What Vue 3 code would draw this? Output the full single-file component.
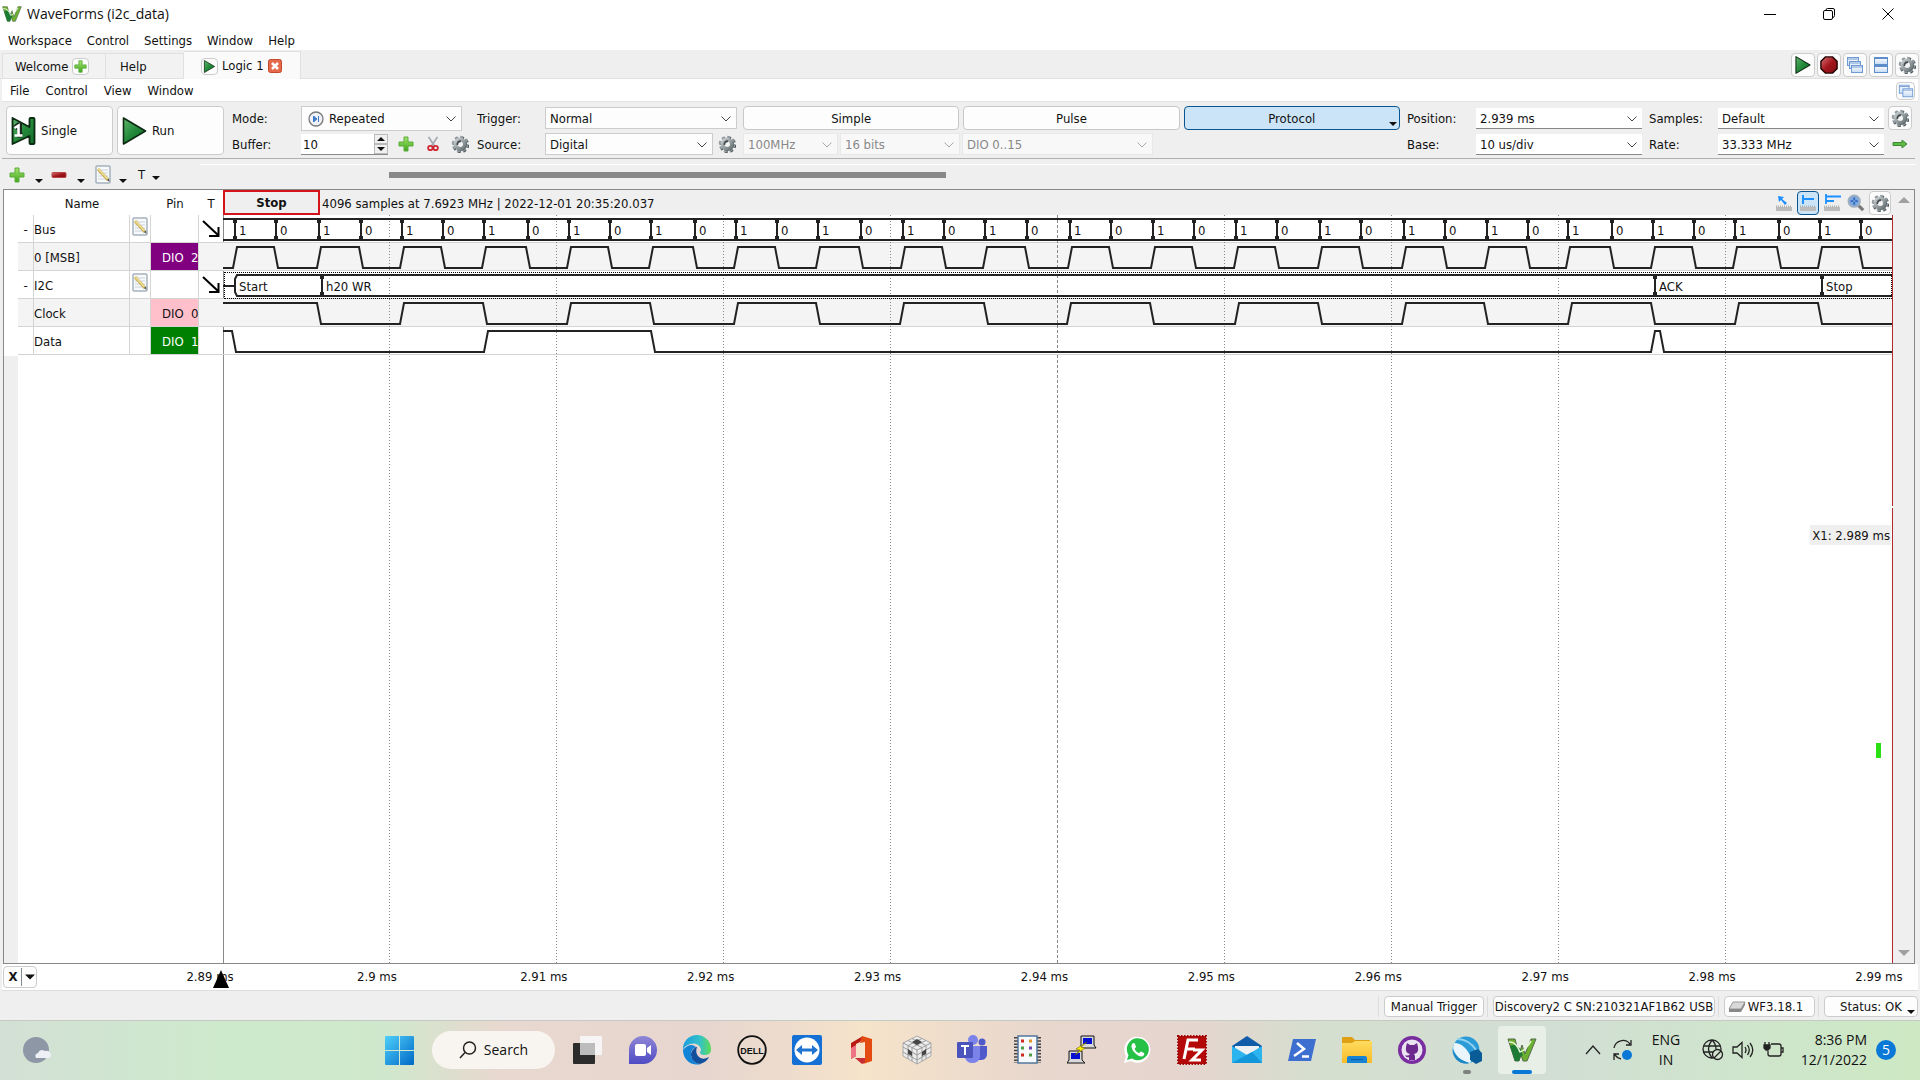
<script setup>
import { ref } from 'vue'

const mainMenu = ['Workspace', 'Control', 'Settings', 'Window', 'Help']
const logicMenu = ['File', 'Control', 'View', 'Window']
const buffer = ref('10')

const span = 1670
const edges = [
  12, 53, 96, 138, 179, 220, 261, 305, 346, 387, 428, 472, 513, 554, 595, 638, 680, 721, 762, 804,
  847, 888, 930, 971, 1013, 1054, 1097, 1138, 1181, 1222, 1264, 1305, 1345, 1389, 1430, 1471, 1512,
  1556, 1597, 1638,
]
const clockEdges = [
  96, 179, 262, 346, 429, 513, 595, 679, 763, 846, 929, 1014, 1097, 1181, 1263, 1347, 1430, 1514, 1597,
]
const dataEdges = [11, 263, 430, 1430, 1439]

function wave(list, startHigh, top, bottom) {
  let high = startHigh
  let d = `M0 ${high ? top : bottom}`
  for (const x of list) {
    d += ` H${x - 2} L${x + 2} ${high ? bottom : top}`
    high = !high
  }
  return `${d} H${span}`
}

const msbPath = wave(edges, false, 32, 53)
const clockPath = wave(clockEdges, true, 88, 109)
const dataPath = wave(dataEdges, true, 116, 137)

const frames = [
  { x: 12, text: 'Start' },
  { x: 99, text: 'h20 WR' },
  { x: 1432, text: 'ACK' },
  { x: 1599, text: 'Stop' },
]
const ticks = ['2.89', '2.9', '2.91', '2.92', '2.93', '2.94', '2.95', '2.96', '2.97', '2.98', '2.99']
const left = (x) => ({ left: `${(x / span) * 100}%` })

const channels = [
  { name: 'Bus', group: true },
  { name: '0 [MSB]', pin: 'DIO  2', tone: 'purple', shade: true },
  { name: 'I2C', group: true },
  { name: 'Clock', pin: 'DIO  0', tone: 'pink', shade: true },
  { name: 'Data', pin: 'DIO  1', tone: 'green' },
]
const apps = [
  'taskview', 'chat', 'edge', 'dell', 'teamviewer', 'office', 'cube', 'teams', 'registers', 'putty',
  'whatsapp', 'filezilla', 'mail', 'powershell', 'folder', 'github', 'globe', 'wave',
]
</script>

<template>
  <div class="desktop">
    <svg class="defs" aria-hidden="true">
      <defs>
        <linearGradient id="gGreen" x1="0" y1="0" x2="1" y2="1">
          <stop offset="0" stop-color="#5fb56d" /><stop offset=".5" stop-color="#23893a" /><stop offset="1" stop-color="#136b29" />
        </linearGradient>
        <linearGradient id="gPlus" x1="0" y1="0" x2="0" y2="1">
          <stop offset="0" stop-color="#a4e46e" /><stop offset="1" stop-color="#3fa51c" />
        </linearGradient>
        <linearGradient id="gRed" x1="0" y1="0" x2="1" y2="1">
          <stop offset="0" stop-color="#d9777a" /><stop offset=".5" stop-color="#a3161c" /><stop offset="1" stop-color="#7c0d12" />
        </linearGradient>
        <linearGradient id="gMetal" x1="0" y1="0" x2="1" y2="1">
          <stop offset="0" stop-color="#c5cbcd" /><stop offset="1" stop-color="#6d777a" />
        </linearGradient>
        <linearGradient id="gWin" x1="0" y1="0" x2="1" y2="1">
          <stop offset="0" stop-color="#4fd0fb" /><stop offset="1" stop-color="#0068c6" />
        </linearGradient>
        <linearGradient id="gPane" x1="0" y1="0" x2="0" y2="1">
          <stop offset="0" stop-color="#ffffff" /><stop offset="1" stop-color="#c6dbf4" />
        </linearGradient>
        <linearGradient id="gChat" x1="0" y1="0" x2="0" y2="1">
          <stop offset="0" stop-color="#8f86d6" /><stop offset="1" stop-color="#4f4bc4" />
        </linearGradient>
        <linearGradient id="gEdge" x1="0" y1="0" x2="1" y2="0">
          <stop offset="0" stop-color="#1b9de2" /><stop offset=".6" stop-color="#33c1c8" /><stop offset="1" stop-color="#5fdc57" />
        </linearGradient>
        <linearGradient id="gFolder" x1="0" y1="0" x2="0" y2="1">
          <stop offset="0" stop-color="#ffdc60" /><stop offset="1" stop-color="#f8bb27" />
        </linearGradient>
        <symbol id="play" viewBox="0 0 24 28"><path d="M1 1 V27 L23 14 Z" fill="url(#gGreen)" stroke="#0c2a12" stroke-width="1.6" stroke-linejoin="round" /></symbol>
        <symbol id="single" viewBox="0 0 24 28">
          <path d="M1 1 L18 10 V2 Q18 1 19 1 H22 Q23 1 23 2 V26 Q23 27 22 27 H19 Q18 27 18 26 V19 L1 27 Z" fill="url(#gGreen)" stroke="#0c2a12" stroke-width="1.8" stroke-linejoin="round" />
          <path d="M3 11 L7 8 H8 V18 H11" fill="none" stroke="#1b2b1e" stroke-width="5" />
          <path d="M3 11 L7 8.500 V18 M3 18.500 H11" fill="none" stroke="#fff" stroke-width="2.600" />
        </symbol>
        <symbol id="stop" viewBox="0 0 20 20"><path d="M6 1 H14 L19 6 V14 L14 19 H6 L1 14 V6 Z" fill="url(#gRed)" stroke="#220405" stroke-width="1.5" /></symbol>
        <symbol id="plus" viewBox="0 0 16 16"><path d="M6 1 H10 V6 H15 V10 H10 V15 H6 V10 H1 V6 H6 Z" fill="url(#gPlus)" stroke="#58ad3a" stroke-linejoin="round" /></symbol>
        <symbol id="minus" viewBox="0 0 16 16"><rect x="1" y="5.500" width="14" height="5" rx="1" fill="url(#gRed)" stroke="#b5484b" /></symbol>
        <symbol id="gear" viewBox="0 0 18 18">
          <circle cx="9.800" cy="9.800" r="7" fill="none" stroke="#4d575a" stroke-width="2.800" stroke-dasharray="2.900 2.598" />
          <circle cx="9" cy="9" r="6.800" fill="none" stroke="#929ca0" stroke-width="3" stroke-dasharray="2.900 2.441" />
          <circle cx="9.800" cy="9.800" r="5" fill="none" stroke="#5d676a" stroke-width="2.500" />
          <circle cx="9" cy="9" r="4.600" fill="none" stroke="url(#gMetal)" stroke-width="3.600" />
          <path d="M6.500 10 A3 3 0 0 1 10 6.300" fill="none" stroke="#414a4d" stroke-width="1.800" />
          <circle cx="9.800" cy="9.800" r="2" fill="#f3f5f5" />
        </symbol>
        <symbol id="note" viewBox="0 0 16 20">
          <rect x="1" y="1" width="14" height="17" rx="1" fill="#f7f9fb" stroke="#a7b2bd" stroke-width="1.500" />
          <path d="M3 5 H13 M3 8 H13 M3 11 H13 M3 14 H13" stroke="#c8d2dc" />
          <path d="M3 4 L13 15" stroke="#c7ae55" stroke-width="3" /><path d="M3 3.500 L12.500 14" stroke="#f2e39a" stroke-width="1.300" />
          <path d="M12 15 L14.500 17 L14 13.500 Z" fill="#555" />
        </symbol>
        <symbol id="scissors" viewBox="0 0 14 18">
          <path d="M2 1 L8.500 11 M12 1 L5.500 11" stroke="#a5abb0" stroke-width="2" />
          <circle cx="4" cy="13.500" r="2.500" fill="none" stroke="#cf2730" stroke-width="2" /><circle cx="10" cy="13.500" r="2.500" fill="none" stroke="#cf2730" stroke-width="2" />
        </symbol>
        <symbol id="cascade" viewBox="0 0 18 18">
          <g fill="url(#gPane)" stroke="#6f9ad2"><rect x="1.500" y="1.500" width="11" height="8" /><path d="M1.500 3 H12.500" /><rect x="3.500" y="5.500" width="11" height="7" /><path d="M3.500 7 H14.500" /><rect x="5.500" y="9.500" width="11" height="7" /><path d="M5.500 11 H16.500" /></g>
        </symbol>
        <symbol id="tile" viewBox="0 0 18 18">
          <g fill="url(#gPane)" stroke="#5f8ccb"><rect x="2.500" y="1.500" width="13" height="7" /><rect x="2.500" y="9.500" width="13" height="7" /><path d="M2.500 2.500 H15.500 M2.500 10.500 H15.500" /></g>
        </symbol>
        <symbol id="dock" viewBox="0 0 18 18">
          <g fill="url(#gPane)" stroke="#6f9ad2"><rect x="1.500" y="2.500" width="11" height="9" /><path d="M1.500 4 H12.500" /><rect x="5.500" y="6.500" width="11" height="9" /><path d="M5.500 8 H16.500" /></g>
        </symbol>
        <symbol id="chev" viewBox="0 0 10 6"><path d="M.5 .5 L5 5 L9.500 .5" fill="none" stroke="currentColor" stroke-width="1" /></symbol>
        <symbol id="drop" viewBox="0 0 8 4"><path d="M0 0 H8 L4 4 Z" fill="currentColor" /></symbol>
        <symbol id="ruler" viewBox="0 0 18 6"><rect x="1" y="2" width="16" height="4" fill="#bcbcbc" /><path d="M1 1.500 H17" stroke="#b0b0b0" stroke-width="2" stroke-dasharray="1 1" /></symbol>
        <symbol id="curFree" viewBox="0 0 18 18"><path d="M3 2 L9 3 L7 5 L12 9 L10 11 L6 6 L4 8 Z" fill="#1e90ff" /><use href="#ruler" y="11" width="18" height="6" /></symbol>
        <symbol id="curOne" viewBox="0 0 18 18"><path d="M4 1 V10 M4 5 H15" stroke="#1e90ff" stroke-width="2" fill="none" /><use href="#ruler" y="11" width="18" height="6" /></symbol>
        <symbol id="curTwo" viewBox="0 0 18 18"><path d="M3 0 V10 M3 2.500 H18 M3 7 H11" stroke="#1e90ff" stroke-width="1.800" fill="none" /><use href="#ruler" y="11" width="18" height="6" /></symbol>
        <symbol id="mag" viewBox="0 0 20 20">
          <path d="M12 12 L18 18" stroke="#77797b" stroke-width="3.500" /><circle cx="8" cy="8" r="6.500" fill="#7ea9de" stroke="#a2afbd" stroke-width="1.800" />
          <path d="M8 4 V12 M4 8 H12" stroke="#2f68bd" stroke-width="2" stroke-dasharray="3 2" />
        </symbol>
        <symbol id="diag" viewBox="0 0 18 18"><path d="M1 1 L16 15 M7 16 H16.500 V7" fill="none" stroke="#000" stroke-width="2" /></symbol>
        <symbol id="wave" viewBox="0 0 30 26">
          <path d="M1 2 H8 L12 17 L15 8 L18 17 L24 2 H29 L20 24 H16 L14 18 L12 24 H8 Z" fill="#6bb12f" stroke="#566b4d" />
          <path d="M3 9 Q9 6 14 13 L16 19 L14 18 L12 24 H8 Z" fill="#1b7b35" /><path d="M2 5 Q9 4 13 15 Q18 14 24 4" fill="none" stroke="#e8f6da" stroke-width="1.500" />
        </symbol>
        <symbol id="taskview" viewBox="0 0 30 30"><rect x="1" y="8" width="22" height="21" rx="1" fill="#2c2c2c" /><rect x="8" y="1" width="22" height="19" rx="1" fill="#f7f7f7" fill-opacity=".9" /><rect x="8" y="8" width="15" height="12" fill="#bcbcbc" /></symbol>
        <symbol id="chat" viewBox="0 0 30 30"><path d="M2 29 V15 A14 14 0 1 1 15 29 Z" fill="url(#gChat)" /><rect x="8" y="9" width="11" height="12" rx="2" fill="#fff" /><path d="M20 13 L24 10 V20 L20 17 Z" fill="#fff" /></symbol>
        <symbol id="edge" viewBox="0 0 30 30">
          <path d="M1 15 A14 14 0 0 1 29 13 Q30 20 22 20 Q18 20 18 17 Q20 15 18 12 Q15 7 8 9 Q2 11 1 15" fill="url(#gEdge)" />
          <path d="M1 15 A14 14 0 0 0 19 29 Q9 28 9 19 Q9 14 14 12 Q8 7 1 15" fill="#1184d7" />
          <path d="M14 12 Q9 15 9 20 Q10 28 18 29 Q25 27 27 22 Q20 26 16 21 Q13 17 15 12 Z" fill="#12509e" />
        </symbol>
        <symbol id="dell" viewBox="0 0 30 30">
          <circle cx="15" cy="15" r="13.800" fill="none" stroke="#111" stroke-width="1.800" />
          <text x="15" y="18.500" text-anchor="middle" class="dell">DELL</text>
        </symbol>
        <symbol id="teamviewer" viewBox="0 0 30 30"><rect width="30" height="30" rx="2" fill="#1470d4" /><circle cx="15" cy="15" r="12.500" fill="#fff" /><path d="M4 15 L10 10 V13.500 H20 V10 L26 15 L20 20 V16.500 H10 V20 Z" fill="#1e74d0" /></symbol>
        <symbol id="office" viewBox="0 0 30 30"><path d="M4 8 L16 1 L13 7 L9 9 V21 L4 24 Z" fill="#b91a13" /><path d="M4 24 V13 L9 10 V21 Z" fill="#ee7385" /><path d="M15 1 L25 4 V26 L16 29 L18 24 V7 L13 8 Z" fill="#e44b10" /><path d="M8 23 H18 V27 L15 29 Z" fill="#c72d34" /></symbol>
        <symbol id="cube" viewBox="0 0 30 30">
          <path d="M15 1 L29 8 V21 L15 29 L1 21 V8 Z" fill="#ececec" stroke="#aaa" /><path d="M1 8 L15 15 L29 8 M15 15 V29 M6 5.500 L20 12.500 V26 M10 3.500 L24 10.500 V24 M20 3.500 L6 10.500 V24 M24 5.500 L10 12.500 V26 M1 12 L15 20 L29 12 M1 17 L15 25 L29 17" fill="none" stroke="#9a9a9a" />
          <path d="M15 4 L20 7 L15 10 L10 7 Z M6 14 L10 17 V21 L6 19 Z M20 17 L24 14 V19 L20 21 Z" fill="#444" />
        </symbol>
        <symbol id="teams" viewBox="0 0 30 30"><circle cx="16" cy="5" r="5" fill="#7b83eb" /><circle cx="25" cy="7" r="3.500" fill="#5059c9" /><path d="M20 11 H30 V20 Q29 25 24 25 H20 Z" fill="#5059c9" /><path d="M8 11 H23 V22 Q22 28 15 28 Q10 28 8 23 Z" fill="#7b83eb" /><rect y="7" width="16" height="16" rx="1" fill="#4b53bc" /><path d="M4 11 H12 M8 11 V20" stroke="#fff" stroke-width="2" /></symbol>
        <symbol id="registers" viewBox="0 0 30 30">
          <path d="M4 2 V28 M27 2 V28" stroke="#444" stroke-width="4" stroke-dasharray="1.500 1.700" /><rect x="6" y="1" width="19" height="27" fill="#f6fafd" stroke="#53779c" stroke-width="1.500" />
          <path d="M9 6 H12 M9 20 H12" stroke="#cf2a1d" stroke-width="3" /><path d="M17 6 H20" stroke="#e49624" stroke-width="3" /><path d="M9 13 H12 M17 20 H20" stroke="#4f9e45" stroke-width="3" /><path d="M17 13 H20" stroke="#7145a9" stroke-width="3" />
        </symbol>
        <symbol id="putty" viewBox="0 0 30 30">
          <g fill="#d9d9d9" stroke="#111"><path d="M14 1 H27 V10 L29 13 H14 Z" /><path d="M2 16 H15 V25 L18 28 H0 L2 25 Z" /></g><rect x="16" y="3" width="9" height="6" fill="#0510d0" /><rect x="4" y="18" width="9" height="6" fill="#0510d0" />
          <path d="M20 7 L9 14 L13 15 L8 20 L18 13 L14 12 Z" fill="#ffee00" stroke="#6d6500" stroke-width=".6" />
        </symbol>
        <symbol id="whatsapp" viewBox="0 0 30 30"><path d="M2 28 L4 21 A13 13 0 1 1 9 26 Z" fill="#fff" /><path d="M5 25 L6.500 20 A11 11 0 1 1 10 23.500 Z" fill="#25c046" /><path d="M10 9 Q12 7 13 9 L14 12 L12.500 14 Q14 17 17 18 L19 16.500 L22 18 Q23 20 20 21.500 Q17 22 13 18 Q8 13 10 9" fill="#fff" /></symbol>
        <symbol id="filezilla" viewBox="0 0 30 30"><rect x="1" y="1" width="28" height="28" fill="#b50808" stroke="#9a0808" stroke-width="2" stroke-dasharray="1.500 1.500" /><path d="M7 24 L11 5 H21 M9 14 H18 M16 15 H25 L15 25 H24" fill="none" stroke="#fff" stroke-width="3" /></symbol>
        <symbol id="mail" viewBox="0 0 30 30"><path d="M0 11 L15 1 L30 11 V18 H0 Z" fill="#105ca9" /><path d="M3 11 H27 V20 H3 Z" fill="#eef1f4" /><path d="M0 11 L15 20 L30 11 V28 H0 Z" fill="#2bb4ee" /><path d="M0 28 L20 17 L30 28 Z" fill="#1396da" /></symbol>
        <symbol id="powershell" viewBox="0 0 30 30"><path d="M6 4 H29 L24 26 H1 Z" fill="#3d6fd0" /><path d="M10 8 L17 14 L7 21 M15 21.500 H22" fill="none" stroke="#fff" stroke-width="2.500" /></symbol>
        <symbol id="folder" viewBox="0 0 30 30"><path d="M0 3 Q0 2 1 2 H10 L13 5 H28 V12 H0 Z" fill="#dfa015" /><path d="M0 8 H10 L13 6 H30 V28 H0 Z" fill="url(#gFolder)" /><path d="M5 28 V23 Q5 21 7 21 H23 Q25 21 25 23 V28 Z" fill="#1784d3" /><path d="M9 24.500 H21" stroke="#0c5da4" /></symbol>
        <symbol id="github" viewBox="0 0 30 30"><circle cx="15" cy="15" r="14" fill="#7a2da1" /><circle cx="15" cy="15" r="10.500" fill="#eae3f0" /><path d="M10 8 L13 10 H17 L20 8 L21 12 Q22 18 17 19 L18 21 V25 H12 V22 Q9 23 8 20 Q10 21 12 20 L13 19 Q8 18 9 12 Z" fill="#6c2a8f" /></symbol>
        <symbol id="globe" viewBox="0 0 30 30"><circle cx="14" cy="15" r="13.500" fill="#2b9bd7" /><path d="M2 8 C10 8 16 14 20 25 L18 28 C8 26 3 20 1 13 Z" fill="#eaf5fb" /><path d="M1 15 C3 21 8 25 17 28 Q10 30 4 24 Q1 20 1 15" fill="#1c86c4" /><path d="M5 4 Q17 4 25 16" fill="none" stroke="#8ed0f0" stroke-width="2" /><path d="M18 17 L26 14 L30 18 V26 L24 29 L18 25 Z" fill="#0a5c97" /></symbol>
      </defs>
    </svg>

    <header class="titlebar">
      <svg class="logo"><use href="#wave" /></svg>
      <h1>WaveForms (i2c_data)</h1>
      <div class="wincontrols">
        <button aria-label="Minimize"><svg viewBox="0 0 12 12"><path d="M0 6.500 H12" /></svg></button>
        <button aria-label="Restore"><svg viewBox="0 0 12 12"><rect x=".5" y="2.500" width="9" height="9" rx="1.500" /><path d="M3 2 Q3 .5 4.500 .5 H10 Q11.500 .5 11.500 2 V7.500 Q11.500 9 10 9.500" /></svg></button>
        <button aria-label="Close"><svg viewBox="0 0 12 12"><path d="M.5 .5 L11.500 11.500 M11.500 .5 L.5 11.500" /></svg></button>
      </div>
    </header>
    <nav class="menubar"><a v-for="m in mainMenu" :key="m" href="#">{{ m }}</a></nav>

    <div class="tabs">
      <div class="tab welcome"><a href="#">Welcome</a><button class="tool small" aria-label="Add instrument"><svg><use href="#plus" /></svg></button></div>
      <div class="tab help"><a href="#">Help</a></div>
      <div class="tab active">
        <button class="tool small" aria-label="Run Logic 1"><svg><use href="#play" /></svg></button><a href="#">Logic 1</a>
        <button class="close" aria-label="Close tab"><svg viewBox="0 0 14 14"><rect x=".5" y=".5" width="13" height="13" rx="2" fill="#e5694a" stroke="#c14a2e" /><path d="M4 4 L10 10 M10 4 L4 10" stroke="#fff" stroke-width="2.500" /></svg></button>
      </div>
      <div class="tabtools">
        <button v-for="i in ['play', 'stop', 'cascade', 'tile', 'gear']" :key="i" class="tool" :aria-label="i"><svg><use :href="'#' + i" /></svg></button>
      </div>
    </div>

    <nav class="menubar inner">
      <a v-for="m in logicMenu" :key="m" href="#">{{ m }}</a>
      <button class="tool dock" aria-label="Undock"><svg><use href="#dock" /></svg></button>
    </nav>

    <section class="toolbar">
      <button class="big"><svg><use href="#single" /></svg>Single</button>
      <button class="big"><svg><use href="#play" /></svg>Run</button>
      <div class="group mode">
        <label for="mode">Mode:</label>
        <div class="combo boxed"><svg class="lead" viewBox="0 0 16 16"><circle cx="8" cy="8" r="7" fill="#eef2f8" stroke="#777" stroke-width="1.300" /><path d="M5.500 5 V11 M6 5.500 L9 8 L6 10.500 Z M10.500 5 V11" fill="#4a82cf" stroke="#3f78c8" /></svg><select id="mode" class="withicon"><option>Repeated</option></select><svg class="arrow"><use href="#chev" /></svg></div>
        <label for="buffer">Buffer:</label>
        <div class="bufrow">
          <div class="spin"><input id="buffer" v-model="buffer" type="text"><span><button aria-label="Increase"><svg class="up"><use href="#drop" /></svg></button><button aria-label="Decrease"><svg><use href="#drop" /></svg></button></span></div>
          <button class="flat" aria-label="Add"><svg><use href="#plus" /></svg></button>
          <button class="flat" aria-label="Cut"><svg><use href="#scissors" /></svg></button>
          <button class="flat" aria-label="Buffer options"><svg><use href="#gear" /></svg></button>
        </div>
      </div>
      <div class="group trigger">
        <label for="trigger">Trigger:</label>
        <div class="combo boxed"><select id="trigger"><option>Normal</option></select><svg class="arrow"><use href="#chev" /></svg></div>
        <label for="source">Source:</label>
        <div class="srcrow">
          <div class="combo boxed"><select id="source"><option>Digital</option></select><svg class="arrow"><use href="#chev" /></svg></div>
          <button class="flat" aria-label="Source options"><svg><use href="#gear" /></svg></button>
        </div>
      </div>
      <div class="kinds">
        <div class="kindrow"><button class="push">Simple</button><button class="push">Pulse</button><button class="push on">Protocol<svg><use href="#drop" /></svg></button></div>
        <div class="offrow">
          <div class="combo off clk"><select aria-label="Clock" disabled><option>100MHz</option></select><svg class="arrow"><use href="#chev" /></svg></div>
          <div class="combo off bits"><select aria-label="Width" disabled><option>16 bits</option></select><svg class="arrow"><use href="#chev" /></svg></div>
          <div class="combo off dio"><select aria-label="Lines" disabled><option>DIO 0..15</option></select><svg class="arrow"><use href="#chev" /></svg></div>
        </div>
      </div>
      <div class="group field">
        <label for="pos">Position:</label>
        <div class="combo line"><select id="pos"><option>2.939 ms</option></select><svg class="arrow"><use href="#chev" /></svg></div>
        <label for="base">Base:</label>
        <div class="combo line"><select id="base"><option>10 us/div</option></select><svg class="arrow"><use href="#chev" /></svg></div>
      </div>
      <div class="group field">
        <label for="samples">Samples:</label>
        <div class="combo line"><select id="samples"><option>Default</option></select><svg class="arrow"><use href="#chev" /></svg></div>
        <label for="rate">Rate:</label>
        <div class="combo line"><select id="rate"><option>33.333 MHz</option></select><svg class="arrow"><use href="#chev" /></svg></div>
      </div>
      <div class="endtools">
        <button class="tool" aria-label="Options"><svg><use href="#gear" /></svg></button>
        <button class="flat" aria-label="Show panel"><svg viewBox="0 0 16 16"><path d="M1 6.500 H10 V4 L15 8 L10 12 V9.500 H1 Z" fill="#62b944" stroke="#3b8a35" /></svg></button>
      </div>
    </section>

    <section class="subbar">
      <div class="edit">
        <button aria-label="Add channel"><svg><use href="#plus" /></svg><svg class="dd"><use href="#drop" /></svg></button>
        <button aria-label="Remove channel"><svg><use href="#minus" /></svg><svg class="dd"><use href="#drop" /></svg></button>
        <button aria-label="Edit channel"><svg class="tall"><use href="#note" /></svg><svg class="dd"><use href="#drop" /></svg></button>
        <button class="t">T<svg class="dd"><use href="#drop" /></svg></button>
      </div>
      <div class="track"><div class="thumb" /></div>
    </section>

    <main class="frame">
      <div class="gutter" />
      <div class="side">
        <table>
          <colgroup><col class="c1"><col class="c2"><col class="c3"><col class="c4"><col class="c5"></colgroup>
          <thead><tr><th /><th>Name</th><th /><th>Pin</th><th>T</th></tr></thead>
          <tbody>
            <tr v-for="c in channels" :key="c.name" :class="{ shade: c.shade }">
              <td class="tog">{{ c.group ? '-' : '' }}</td>
              <td class="name">{{ c.name }}</td>
              <td><button v-if="c.group" class="note" :aria-label="'Edit ' + c.name"><svg><use href="#note" /></svg></button></td>
              <td class="pin" :class="c.tone">{{ c.pin }}</td>
              <td class="trig"><svg v-if="c.group"><use href="#diag" /></svg></td>
            </tr>
          </tbody>
        </table>
      </div>
      <div class="scope">
        <div class="scopehead">
          <strong>Stop</strong><span>4096 samples at 7.6923 MHz | 2022-12-01 20:35:20.037</span>
          <div class="scopetools">
            <button aria-label="Free cursor"><svg><use href="#curFree" /></svg></button>
            <button class="sel" aria-label="Single cursor"><svg><use href="#curOne" /></svg></button>
            <button aria-label="Delta cursor"><svg><use href="#curTwo" /></svg></button>
            <button aria-label="Zoom"><svg><use href="#mag" /></svg></button>
            <button class="tool" aria-label="View options"><svg><use href="#gear" /></svg></button>
          </div>
        </div>
        <div class="plot">
          <div class="rows"><i /><i class="shade" /><i /><i class="shade" /><i /></div>
          <svg class="grid" viewBox="0 0 1670 100" preserveAspectRatio="none">
            <path v-for="n in 9" :key="n" :d="`M${n * 167 - 0.5} 0 V100`" :class="{ mid: n === 5 }" />
          </svg>
          <svg class="traces" viewBox="0 0 1670 140" preserveAspectRatio="none">
            <path d="M0 4 H1670 M0 25 H1670" />
            <path v-for="x in edges" :key="x" :d="`M${x} 4 V25`" />
            <path v-for="x in edges" :key="'c' + x" class="cap" :d="`M${x} 4 V8 M${x} 21 V25`" />
            <path :d="msbPath" />
            <path d="M0 71 H11 M1670 60 H14 L12 64 V77 L14 81 H1670" />
            <path v-for="f in frames.slice(1)" :key="f.x" :d="`M${f.x} 60 V81`" />
            <path v-for="f in frames.slice(1)" :key="'f' + f.x" class="cap" :d="`M${f.x} 60 V64 M${f.x} 77 V81`" />
            <path :d="clockPath" />
            <path :d="dataPath" />
          </svg>
          <div class="focus" />
          <span v-for="(x, i) in edges" :key="i" class="val bus" :style="left(x)">{{ i % 2 ? 0 : 1 }}</span>
          <span v-for="f in frames" :key="f.text" class="val i2c" :style="left(f.x)">{{ f.text }}</span>
          <span class="cursor">X1: 2.989 ms</span>
          <span class="mark" />
          <span class="nick" />
        </div>
      </div>
      <div class="scroll"><svg class="up"><use href="#drop" /></svg><svg><use href="#drop" /></svg></div>
    </main>

    <div class="axis">
      <button class="xbtn"><b>X</b><svg><use href="#drop" /></svg></button>
      <div class="ticks"><span v-for="t in ticks" :key="t">{{ t }} ms</span></div>
      <svg class="pointer" viewBox="0 0 16 18"><path d="M8 0 L16 18 H0 Z" /></svg>
    </div>

    <footer class="status">
      <div><button class="s1">Manual Trigger</button></div>
      <div><button class="s2">Discovery2 C SN:210321AF1B62 USB</button></div>
      <div><button class="s3"><svg viewBox="0 0 18 12"><path d="M5 1 H17 L13 8 H1 Z" fill="#d8d8d8" stroke="#999" /><path d="M1 8 H13 L17 1 V4 L13 11 H1 Z" fill="#888" /></svg>WF3.18.1</button></div>
      <div><button class="s4">Status: OK<svg><use href="#drop" /></svg></button></div>
    </footer>

    <footer class="taskbar">
      <button class="weather" aria-label="Weather"><svg viewBox="0 0 28 28"><circle cx="13" cy="14" r="13" fill="#8e97a5" /><path d="M13 22 Q11 18 15 17 Q17 12 22 15 Q27 14 28 19 Q28 22 25 22 Z" fill="#eef0f5" /></svg></button>
      <button class="start" aria-label="Start"><svg viewBox="0 0 29 29"><path d="M0 1 Q0 0 1 0 H14 V14 H0 Z M15 0 H28 Q29 0 29 1 V14 H15 Z M0 15 H14 V29 H1 Q0 29 0 28 Z M15 15 H29 V28 Q29 29 28 29 H15 Z" fill="url(#gWin)" /></svg></button>
      <button class="search"><svg viewBox="0 0 18 18"><circle cx="10.500" cy="7" r="6" /><path d="M6 11.500 L1 17" /></svg>Search</button>
      <div class="apps">
        <button v-for="a in apps" :key="a" :class="{ current: a === 'wave', open: a === 'globe' }" :aria-label="a"><svg><use :href="'#' + a" /></svg></button>
      </div>
      <div class="tray">
        <button class="exp" aria-label="Show hidden icons"><svg viewBox="0 0 16 10"><path d="M1 9 L8 1 L15 9" /></svg></button>
        <button class="sync" aria-label="Updates"><svg viewBox="0 0 22 22"><path d="M2 9 A9 9 0 0 1 18 5 M19 1 V6 H14 M2 21 V15 H7 M2 15 Q5 19 9 20" /><circle cx="15" cy="16" r="5" fill="#0a78d6" stroke="none" /></svg></button>
        <div class="lang">ENG<br>IN</div>
        <button class="net" aria-label="Network"><svg viewBox="0 0 22 22"><circle cx="10" cy="10" r="9" /><path d="M1.500 7 H18.500 M1.500 13 H11 M10 1 Q3 10 10 19 M10 1 Q14 5 14 10" /><circle cx="15.500" cy="15.500" r="5" fill="#d5e3d2" /><path d="M12 19 L19 12" /></svg></button>
        <button class="vol" aria-label="Volume"><svg viewBox="0 0 22 22"><path d="M1 8 H5 L10 3.500 V18.500 L5 14 H1 Z M13 8 Q15 11 13 14 M15.500 6 Q19 11 15.500 16 M18 4 Q23.500 11 18 18" /></svg></button>
        <button class="bat" aria-label="Battery"><svg viewBox="0 0 22 22"><path d="M9 5 H17 Q19 5 19 7 V15 Q19 17 17 17 H8 Q6 17 6 15 V12 M19 9 H21 V13 H19" /><path d="M3 3 V6 M7 3 V6 M2 6 H8 V9 L6 11 H4 L2 9 Z" fill="#222" /></svg></button>
        <div class="clock">8:36 PM<br>12/1/2022</div>
        <span class="badge">5</span>
      </div>
    </footer>
  </div>
</template>

<style>
body { margin: 0; }
</style>

<style scoped>
* { box-sizing: border-box; }
.desktop {
  display: flex; flex-direction: column; min-height: 100vh; background: #efefef; color: #111;
  font: 13px/16px "DejaVu Sans Condensed", "Noto Sans", sans-serif;
}
.defs { position: absolute; width: 0; height: 0; }
.dell { font: bold 9px "Liberation Sans", sans-serif; fill: #111; }
a { color: inherit; text-decoration: none; }
button { font: inherit; color: inherit; padding: 0; margin: 0; border: 0; background: none; display: flex; align-items: center; justify-content: center; flex: none; }
svg { display: block; flex: none; }

.titlebar { display: flex; align-items: center; height: 30px; background: #fff; padding: 0 20px 2px 2px; }
.logo { width: 20px; height: 18px; }
h1 { font: 14px/20px "Open Sans", sans-serif; margin: 0 0 0 5px; flex: 1; }
.wincontrols { display: flex; }
.wincontrols button { width: 59px; height: 28px; }
.wincontrols button:last-child { margin-right: -17px; }
.wincontrols svg { width: 12px; height: 12px; fill: none; stroke: #000; }

.menubar { display: flex; align-items: center; height: 20px; background: #fff; padding: 2px 8px 0; gap: 15px; }
.inner { height: 23px; margin: 0 2px; padding: 2px 3px 0 8px; gap: 16px; border-bottom: 1px solid #e2e2e2; }

.tabs { display: flex; align-items: flex-end; height: 29px; padding-left: 2px; border-bottom: 1px solid #e0e0e0; }
.tab { display: flex; align-items: center; height: 25px; background: #f2f2f2; border: 1px solid #e0e0e0; border-bottom: 0; gap: 4px; padding-top: 1px; }
.welcome { width: 104px; padding-left: 12px; }
.help { width: 78px; padding-left: 14px; border-left: 0; }
.active { width: 117px; height: 28px; background: #fafafa; margin-bottom: -1px; padding-left: 17px; border-left: 0; }
.close svg { width: 14px; height: 14px; }
.tool { border: 1px solid #ccc; border-radius: 4px; background: #fcfcfc; width: 24px; height: 24px; }
.tool svg { width: 18px; height: 18px; }
.tool.small { width: 17px; height: 17px; }
.tool.small svg { width: 13px; height: 13px; }
.tool.dock { width: 19px; height: 18px; margin-left: auto; }
.tool.dock svg { width: 16px; height: 16px; }
.tabtools { display: flex; gap: 2px; margin: 0 1px 1px auto; }

.toolbar { display: flex; height: 57px; margin: 0 5px 0 2px; padding: 4px 3px 0 4px; border-bottom: 1px solid #b0b0b0; }
.big { width: 107px; height: 49px; border: 1px solid #ccc; border-radius: 4px; background: #fdfdfd; justify-content: flex-start; gap: 5px; padding: 1px 0 0 4px; margin-right: 4px; }
.big svg { width: 25px; height: 28px; }
.group { display: grid; grid-template-rows: 24px 24px; row-gap: 2px; align-items: center; align-content: start; }
.group label { padding-top: 2px; }
.mode { grid-template-columns: 69px 161px; margin: 0 15px 0 4px; }
.trigger { grid-template-columns: 68px 192px; margin-right: 6px; }
.field { grid-template-columns: 69px 166px; margin-left: 7px; }
.combo { position: relative; display: flex; height: 22px; background: #fdfdfd; }
.boxed { border: 1px solid #ccc; }
.mode .boxed { height: 25px; }
.line { border-bottom: 1px solid #888; height: 21px; background: #fff; }
select { appearance: none; flex: 1; min-width: 0; width: 100%; border: 0; padding: 2px 20px 0 4px; background: none; color: inherit; font: inherit; opacity: 1; }
.withicon { padding-left: 27px; }
.lead { position: absolute; left: 6px; top: 4px; width: 16px; height: 16px; }
.arrow { position: absolute; right: 5px; top: 8px; width: 10px; height: 6px; color: #444; }
.mode .arrow { top: 9px; }
.bufrow, .srcrow, .offrow, .kindrow { display: flex; align-items: center; }
.bufrow { gap: 9px; }
.bufrow .flat { width: 18px; height: 18px; }
.spin { display: flex; width: 87px; height: 21px; background: #fff; border-bottom: 1px solid #888; }
.spin input { width: 73px; min-width: 0; border: 0; padding: 2px 0 0 2px; font: inherit; background: none; color: inherit; }
.spin span { display: flex; flex-direction: column; }
.spin span button { width: 14px; height: 10px; border: 1px solid #bbb; background: #f0f0f0; }
.spin span svg { width: 8px; height: 4px; }
.up { transform: rotate(180deg); }
.flat svg { width: 16px; height: 16px; }
.flat + .flat + .flat svg, .srcrow .flat svg { width: 18px; height: 18px; }
.srcrow .combo { width: 168px; }
.srcrow .flat { margin-left: 5px; }
.kinds { flex: 1; display: grid; grid-template-rows: 24px 24px; row-gap: 2px; align-content: start; }
.kindrow { gap: 4px; }
.push { flex: 1; height: 24px; border: 1px solid #c8c8c8; border-radius: 4px; background: #fdfdfd; position: relative; padding-top: 2px; }
.on { background: #cce4f7; border-color: #0a5590; }
.push svg { position: absolute; right: 2px; bottom: 3px; width: 8px; height: 4px; }
.offrow { gap: 2px; }
.off { border: 1px solid #e8e8e8; background: #f8f8f8; color: #888; }
.off .arrow { color: #aaa; }
.clk { width: 95px; } .bits { width: 120px; } .dio { width: 191px; }
.endtools { display: flex; flex-direction: column; align-items: center; gap: 6px; margin-left: 4px; }

.subbar { display: flex; height: 30px; padding: 5px 4px 0 0; }
.edit { display: flex; width: 200px; padding: 0 0 4px 9px; }
.edit button { width: 42px; justify-content: flex-start; gap: 5px; }
.edit svg { width: 16px; height: 16px; }
.edit .tall { width: 16px; height: 20px; margin-left: 2px; margin-right: -2px; }
.edit .dd { width: 8px; height: 4px; margin: 12px 0 0 5px; }
.edit .t { padding-left: 3px; gap: 2px; }
.edit .t .dd { margin-top: 6px; }
.track { flex: 1; border-top: 1px solid #fff; padding-top: 7px; }
.thumb { width: 33%; max-width: 557px; min-width: 300px; height: 6px; margin-left: 11%; background: #888; }

.frame { flex: 1; display: flex; margin: 0 5px 0 3px; border: 1px solid #888; background: #fff; min-height: 400px; }
.gutter { width: 14px; flex: none; background: linear-gradient(#fff 166px, #efefef 166px); }
.side { width: 205px; flex: none; }
table { border-collapse: separate; border-spacing: 0; table-layout: fixed; width: 205px; }
.c1 { width: 16px; } .c2 { width: 96px; } .c3 { width: 21px; } .c4 { width: 48px; } .c5 { width: 24px; }
th { font-weight: normal; height: 25px; padding: 2px 0 0; text-align: center; }
td { height: 28px; padding: 3px 0 0; border-bottom: 1px solid #d4d4d4; border-right: 1px solid #d4d4d4; line-height: 16px; white-space: pre; overflow: hidden; }
td:last-child { border-right: 0; }
.shade { background: #f4f4f4; }
.tog { text-align: center; }
.pin { padding-left: 11px; }
.purple { background: #800080; color: #fff; }
.pink { background: #ffc0cb; }
.green { background: #008000; color: #fff; }
.note { margin: -7px 0 0 2px; }
.note svg { width: 16px; height: 20px; }
.trig { padding-top: 1px; }
.trig svg { width: 18px; height: 18px; margin-left: 3px; }

.scope { flex: 1; display: flex; flex-direction: column; min-width: 0; }
.scopehead { display: flex; align-items: center; height: 25px; background: #efefef; }
.scopehead strong { width: 97px; height: 25px; line-height: 22px; border: 2px solid #d4141a; text-align: center; margin-right: 2px; }
.scopehead span { padding-top: 2px; }
.scopetools { display: flex; align-items: center; gap: 2px; margin: 0 2px 0 auto; }
.scopetools button { width: 22px; height: 24px; }
.scopetools svg { width: 18px; height: 18px; }
.scopetools .sel { background: #cce4f7; border: 1px solid #0a5590; border-radius: 4px; }
.plot { position: relative; flex: 1; }
.plot::before, .plot::after { content: ""; position: absolute; top: 0; bottom: 0; width: 1px; }
.plot::before { left: 0; background: #888; }
.plot::after { right: 0; background: #b52a30; }
.rows { position: absolute; inset: 0; }
.rows i { display: block; height: 28px; border-bottom: 1px solid #d4d4d4; }
.grid { position: absolute; left: 0; top: 0; width: 100%; height: 100%; }
.grid path { stroke: #888; stroke-dasharray: 1 2; vector-effect: non-scaling-stroke; }
.grid .mid { stroke-dasharray: 3 2; }
.traces { position: absolute; left: 0; top: 0; width: 100%; height: 140px; }
.traces path { fill: none; stroke: #222; stroke-width: 2px; vector-effect: non-scaling-stroke; }
.traces .cap { stroke-width: 4px; }
.focus { position: absolute; left: 1px; right: 1px; top: 57px; height: 27px; border: 1px dotted #000; }
.val { position: absolute; margin-left: 4px; }
.bus { top: 8px; }
.i2c { top: 64px; }
.cursor { position: absolute; right: 2px; top: 310px; height: 20px; line-height: 22px; padding: 0 1px 0 2px; background: #efefef; }
.mark { position: absolute; right: 12px; top: 528px; width: 5px; height: 15px; background: #2be012; }
.nick { position: absolute; right: 0; top: 291px; width: 1px; height: 2px; background: #fff; z-index: 1; }
.scroll { width: 21px; flex: none; background: #efefef; display: flex; flex-direction: column; justify-content: space-between; align-items: center; padding: 6px 0; color: #a0a0a0; }
.scroll svg { width: 12px; height: 8px; }

.axis { position: relative; display: flex; align-items: center; height: 27px; margin: 0 2px; padding: 0 39px 0 1px; background: #fff; border-bottom: 1px solid #ddd; }
.xbtn { width: 34px; height: 22px; border: 1px solid #ccc; border-radius: 4px; background: #fdfdfd; }
.xbtn b { width: 16px; line-height: 18px; border-right: 1px solid #888; }
.xbtn svg { width: 10px; height: 6px; margin-left: 3px; }
.ticks { flex: 1; display: flex; justify-content: space-between; margin-left: 173px; }
.ticks span { width: 0; display: flex; justify-content: center; white-space: nowrap; }
.pointer { position: absolute; left: 211px; bottom: 2px; width: 16px; height: 18px; }

.status { display: flex; justify-content: flex-end; height: 29px; padding: 5px 2px 3px; }
.status div { border-left: 1px solid #ddd; padding-left: 5px; margin-left: 3px; display: flex; }
.status button { height: 21px; border: 1px solid #ccc; border-radius: 4px; background: #fdfdfd; position: relative; white-space: nowrap; padding-top: 1px; }
.s1 { width: 100px; } .s2 { width: 222px; } .s3 { width: 91px; } .s4 { width: 94px; }
.s3 svg { width: 18px; height: 12px; margin: 0 2px 0 -8px; }
.s4 svg { position: absolute; right: 2px; bottom: 2px; width: 8px; height: 4px; }

.taskbar {
  display: flex; align-items: center; height: 60px; border-top: 1px solid #c5cbc2; padding: 0 24px 1px 23px; font: 14px/20px "Open Sans", sans-serif;
  background: linear-gradient(90deg, #d3e0d5 0, #cdeacc 12%, #cfe8cd 20%, #e8d8cf 26%, #e6d6cf 37%, #f5e3ca 45%, #e8d7cd 54%, #e5d5cf 62%, #d4dfcf 69%, #d2ded4 80%, #cfe4cd 90%, #cde9c3 100%);
}
.weather svg { width: 28px; height: 28px; }
.start { margin-left: 334px; }
.start svg { width: 29px; height: 29px; }
.search { width: 123px; height: 38px; border-radius: 19px; background: #f8f5f0; margin-left: 18px; gap: 7px; }
.search svg { width: 18px; height: 18px; fill: none; stroke: #222; stroke-width: 1.5px; }
.apps { display: flex; margin-left: 8px; gap: 7px; }
.apps button { width: 48px; height: 48px; border-radius: 4px; position: relative; }
.apps svg { width: 30px; height: 30px; }
.current { background: #e8efe7; }
.current::after, .open::after { content: ""; position: absolute; bottom: 0; height: 4px; border-radius: 2px; width: 20px; background: #0a78d6; }
.open::after { width: 8px; background: #808080; }
.tray { display: flex; align-items: center; margin-left: auto; }
.tray svg { width: 22px; height: 22px; fill: none; stroke: #222; stroke-width: 1.3px; }
.exp { margin-right: 11px; }
.tray .exp svg { width: 16px; height: 10px; }
.lang { width: 44px; margin: 0 14px 0 10px; text-align: center; }
.net, .vol { margin-right: 8px; }
.clock { width: 83px; text-align: right; }
.badge { width: 20px; height: 20px; border-radius: 10px; background: #0a78d6; color: #fff; text-align: center; margin-left: 9px; }
</style>
